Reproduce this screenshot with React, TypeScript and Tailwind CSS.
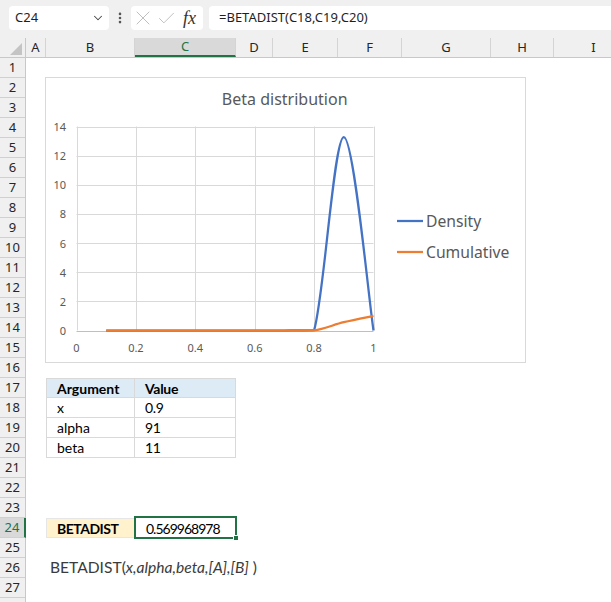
import { ChevronDown, X, Check, EllipsisVertical } from 'lucide-react';

const cols = [
  { name: 'A', w: 'w-[20px]' },
  { name: 'B', w: 'w-[89px]' },
  { name: 'C', w: 'w-[101px]' },
  { name: 'D', w: 'w-[37px]' },
  { name: 'E', w: 'w-[65px]' },
  { name: 'F', w: 'w-[64px]' },
  { name: 'G', w: 'w-[89px]' },
  { name: 'H', w: 'w-[63px]' },
  { name: 'I', w: 'w-[80px]' },
];

const rows = Array.from({ length: 28 }, (_, i) => i + 1);

// chart geometry (px inside the chart box)
const X0 = 30.5;
const XW = 297;
const Y0 = 252.5;
const YU = 14.571;
const px = (v: number) => X0 + v * XW;
const py = (v: number) => Y0 - v * YU;

const xs = [0.1, 0.2, 0.3, 0.4, 0.5, 0.6, 0.7, 0.8, 0.9, 1];
const density = [0, 0, 0, 0, 0, 0, 0, 0.02, 13.27, 0];
const cumulative = [0, 0, 0, 0, 0, 0, 0, 0.002, 0.57, 1];

// smoothed line like Excel's, control points kept above the axis
function smoothPath(ys: number[]) {
  const pts = xs.map((x, i) => [px(x), py(ys[i])]);
  const clamp = (y: number) => Math.min(y, Y0);
  let d = `M${pts[0][0]},${pts[0][1]}`;
  for (let i = 0; i < pts.length - 1; i++) {
    const p0 = pts[i - 1] || pts[i];
    const p1 = pts[i];
    const p2 = pts[i + 1];
    const p3 = pts[i + 2] || p2;
    const c1x = p1[0] + (p2[0] - p0[0]) / 6;
    const c1y = clamp(p1[1] + (p2[1] - p0[1]) / 6);
    const c2x = p2[0] - (p3[0] - p1[0]) / 6;
    const c2y = clamp(p2[1] - (p3[1] - p1[1]) / 6);
    d += ` C${c1x},${c1y} ${c2x},${c2y} ${p2[0]},${p2[1]}`;
  }
  return d;
}

function Chart() {
  const yTicks = [0, 2, 4, 6, 8, 10, 12, 14];
  const xTicks = [0, 0.2, 0.4, 0.6, 0.8, 1];
  return (
    <div className="absolute left-[19px] top-[19px] w-[481px] h-[286px] bg-white border border-[#d9d9d9]">
      <svg width="479" height="284" className="block" style={{ fontFamily: '"Noto Sans", sans-serif' }}>
        <text x="238.7" y="21" textAnchor="middle" dominantBaseline="central" fontSize="16" fill="#595959">
          Beta distribution
        </text>
        {yTicks.map((t) => (
          <g key={t}>
            <line
              x1={X0}
              x2={px(1)}
              y1={Math.round(py(t)) + 0.5}
              y2={Math.round(py(t)) + 0.5}
              stroke={t === 0 ? '#bfbfbf' : '#d9d9d9'}
              strokeWidth="1"
            />
            <text x="20" y={py(t)} textAnchor="end" dominantBaseline="central" fontSize="11" fill="#595959">
              {t}
            </text>
          </g>
        ))}
        {xTicks.map((t) => (
          <g key={t}>
            <line
              x1={Math.round(px(t)) + 0.5}
              x2={Math.round(px(t)) + 0.5}
              y1={py(14)}
              y2={py(0)}
              stroke="#d9d9d9"
              strokeWidth="1"
            />
            <text x={px(t)} y="269" textAnchor="middle" dominantBaseline="central" fontSize="11" fill="#595959">
              {t}
            </text>
          </g>
        ))}
        <path d={smoothPath(density)} fill="none" stroke="#4472c4" strokeWidth="2.25" strokeLinejoin="round" />
        <path d={smoothPath(cumulative)} fill="none" stroke="#ed7d31" strokeWidth="2.25" strokeLinejoin="round" />
        <line x1="351" x2="377" y1="143" y2="143" stroke="#4472c4" strokeWidth="2.25" />
        <text x="380" y="143" dominantBaseline="central" fontSize="15.7" fill="#595959">
          Density
        </text>
        <line x1="351" x2="377" y1="174" y2="174" stroke="#ed7d31" strokeWidth="2.25" />
        <text x="380" y="174" dominantBaseline="central" fontSize="15.7" fill="#595959">
          Cumulative
        </text>
      </svg>
    </div>
  );
}

function Cell({ row, col }: { row: number; col: string }) {
  const base = 'h-full shrink-0 relative';
  if (row >= 17 && row <= 20 && (col === 'B' || col === 'C')) {
    const head = row === 17;
    const text =
      col === 'B'
        ? ['Argument', 'x', 'alpha', 'beta'][row - 17]
        : ['Value', '0.9', '91', '11'][row - 17];
    return (
      <div
        className={`${base} flex items-center pl-[10px] border-r border-b border-[#d9d9d9] ${
          col === 'B' ? 'border-l' : 'tracking-[-0.3px]'
        } ${head ? 'border-t bg-[#ddebf7] font-bold' : 'bg-white'}`}
      >
        {text}
      </div>
    );
  }
  if (row === 24 && col === 'B') {
    return (
      <div className={`${base} flex items-center pl-[10px] bg-[#fff2cc] border border-[#e6e6e6] font-bold tracking-[-0.5px]`}>
        BETADIST
      </div>
    );
  }
  if (row === 24 && col === 'C') {
    return (
      <div className={`${base} flex items-center pl-[11px] tracking-[-1px]`}>
        0.569968978
        <div className="absolute -left-[1px] -top-[2px] -right-[1px] -bottom-[1px] border-2 border-[#217346]" />
        <div className="absolute -right-[3px] -bottom-[3px] w-[6px] h-[6px] bg-[#217346] border border-white" />
      </div>
    );
  }
  if (row === 26 && col === 'B') {
    return (
      <div className={`${base} flex items-center pl-[4px] whitespace-nowrap overflow-visible text-[15.6px] text-[#3b3b3b] z-10`}>
        BETADIST(<i>x,alpha,beta,[A],[B]</i>&nbsp;)
      </div>
    );
  }
  return <div className={base} />;
}

export default function App() {
  return (
    <div
      className="w-[611px] h-[602px] overflow-hidden bg-white text-black"
      style={{ fontFamily: '"Noto Sans", sans-serif' }}
    >
      {/* Formula bar */}
      <div className="h-[38px] bg-[#f0f0f0] flex items-start pt-[6px] pl-[9px]">
        <div className="w-[100px] h-[24px] bg-white rounded-[4px] flex items-center justify-between pl-[6px] pr-[4px] text-[13px] text-[#1f1f1f]">
          <span>C24</span>
          <ChevronDown size={14} strokeWidth={1.75} className="text-[#444]" />
        </div>
        <div className="w-[22px] h-[24px] flex items-center justify-center text-[#555]">
          <EllipsisVertical size={14} strokeWidth={2.5} />
        </div>
        <div className="w-[72px] h-[24px] bg-white rounded-[4px] flex items-center">
          <X size={24} strokeWidth={0.9} className="text-[#b8b8b8] shrink-0" />
          <Check size={21} strokeWidth={1} className="text-[#b8b8b8] shrink-0 ml-[1px]" />
          <span
            className="italic text-[18px] text-[#333] leading-none ml-[6px]"
            style={{ fontFamily: '"Liberation Serif", serif' }}
          >
            fx
          </span>
        </div>
        <div className="ml-[6px] flex-1 h-[24px] bg-white rounded-l-[4px] flex items-center pl-[10px] text-[13px] text-[#1f1f1f]">
          =BETADIST(C18,C19,C20)
        </div>
      </div>

      {/* Column headers */}
      <div className="h-[20px] flex bg-[#f0f0f0] border-b border-[#c8c8c8] text-[13px] text-[#262626]">
        <div className="w-[26px] shrink-0 border-r border-[#c8c8c8] relative">
          <svg width="14" height="14" className="absolute left-[9px] top-[4px]">
            <polygon points="13,1 13,13 1,13" fill="#c4c4c4" />
          </svg>
        </div>
        {cols.map((c) => (
          <div
            key={c.name}
            className={`${c.w} shrink-0 flex items-center justify-center border-r border-[#d4d4d4] ${
              c.name === 'C' ? 'bg-[#d9d9d9] text-[#217346] border-b-2 border-b-[#217346]' : ''
            }`}
          >
            {c.name}
          </div>
        ))}
      </div>

      {/* Sheet body */}
      <div className="flex">
        <div className="w-[26px] shrink-0 bg-[#f0f0f0] border-r border-[#c8c8c8] text-[13px] text-[#262626]">
          {rows.map((r) => (
            <div
              key={r}
              className={`h-[20px] flex items-center justify-center border-b border-[#d0d0d0] ${
                r === 24 ? 'bg-[#d9d9d9] text-[#217346] border-r-2 border-r-[#217346] -mr-[1px]' : ''
              }`}
            >
              {r < 28 ? r : ''}
            </div>
          ))}
        </div>
        <div
          className="relative flex-1 text-[14px]"
          style={{ fontFamily: 'Lato, "Liberation Sans", sans-serif' }}
        >
          {rows.map((r) => (
            <div key={r} className="h-[20px] flex">
              {cols.map((c) => (
                <div key={c.name} className={`${c.w} shrink-0 h-full`}>
                  <Cell row={r} col={c.name} />
                </div>
              ))}
            </div>
          ))}
          <Chart />
        </div>
      </div>
    </div>
  );
}
